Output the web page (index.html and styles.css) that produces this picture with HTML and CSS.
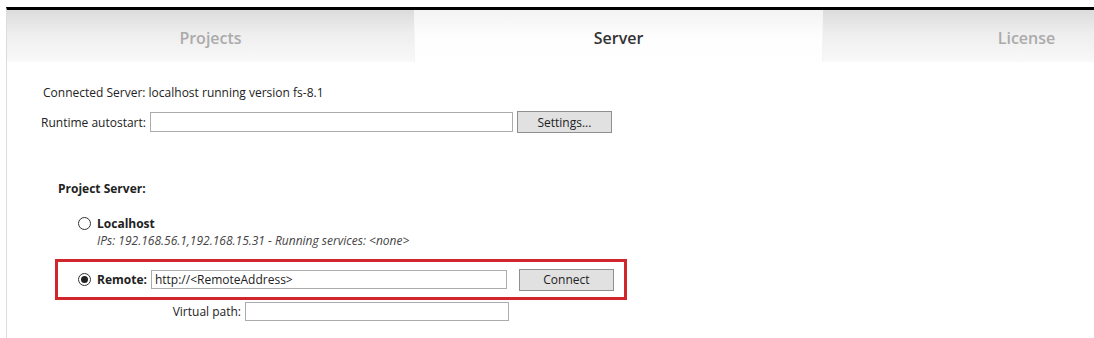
FILE: index.html
```html
<!DOCTYPE html>
<html lang="en">
<head>
  <meta charset="UTF-8" />
  <title>Server settings</title>
  <link rel="stylesheet" href="styles.css">
</head>
<body>
  <div class="frame">
    <div class="tabs">
      <div class="tab">Projects</div>
      <div class="tab active">Server</div>
      <div class="tab">License</div>
    </div>

    <div class="content">
      <p class="status">Connected Server: localhost running version fs-8.1</p>

      <div class="row runtime">
        <label>Runtime autostart:</label>
        <input type="text" class="field wide">
        <button class="btn">Settings...</button>
      </div>

      <h3>Project Server:</h3>

      <div class="option">
        <div class="row">
          <span class="radio"></span>
          <b>Localhost</b>
        </div>
        <div class="hint">IPs: 192.168.56.1,192.168.15.31 - Running services: &lt;none&gt;</div>
      </div>

      <div class="remote">
        <span class="radio checked"></span>
        <b>Remote:</b>
        <input type="text" class="field url" value="http://&lt;RemoteAddress&gt;">
        <button class="btn">Connect</button>
      </div>

      <div class="row vpath">
        <label>Virtual path:</label>
        <input type="text" class="field path">
      </div>
    </div>
  </div>
</body>
</html>
```

FILE: styles.css
```css
* { margin: 0; padding: 0; box-sizing: border-box; }
body, html {
  height: 100%;
  background: #fff;
  font-family: 'Open Sans', 'Noto Sans', sans-serif;
  font-size: 12px;
  color: #222;
  overflow: hidden;
}
.frame {
  margin: 7px 0 0 6px;
  border-top: 3px solid #000;
  border-left: 1px solid #dcdcdc;
  height: 100%;
  width: 1088px;
  overflow: hidden;
}
.tabs {
  display: flex;
  height: 52px;
}
.tab {
  flex: 0 0 408px;
  display: flex;
  align-items: center;
  justify-content: center;
  padding-top: 3px;
  font-size: 16px;
  font-weight: 600;
  color: #ababab;
  background: linear-gradient(#dcdcdc, #eeeeee 45%, #f9f9f9);
  border-right: 1px solid #f4f4f4;
}
.tab.active {
  color: #333;
  background: linear-gradient(#f3f3f3, #fdfdfd 50%, #fff);
}
.content {
  padding: 23px 0 0 36px;
}
.status {
  line-height: 16px;
  margin-bottom: 10px;
}
.row {
  display: flex;
  align-items: center;
  gap: 4px;
}
.runtime label { margin-left: -2px; }
.field {
  height: 20px;
  border: 1px solid #acacac;
  background: #fff;
  font: inherit;
  color: #222;
  padding: 0 3px;
  outline: none;
}
.wide { width: 363px; }
.btn {
  width: 95px;
  height: 22px;
  border: 1px solid #8f8f8f;
  background: #e1e1e1;
  font: inherit;
  font-size: 12px;
  color: #222;
}
h3 {
  font-size: 12px;
  font-weight: 700;
  margin: 48px 0 0 15px;
  line-height: 16px;
}
.option {
  margin: 18px 0 0 35px;
}
.option .row { gap: 6px; }
.hint {
  font-style: italic;
  color: #444;
  margin: 1px 0 0 19px;
  line-height: 15px;
}
.radio {
  width: 13px;
  height: 13px;
  border: 1px solid #333;
  border-radius: 50%;
  display: inline-flex;
  align-items: center;
  justify-content: center;
  background: #fff;
}
.radio.checked::after {
  content: "";
  width: 7px;
  height: 7px;
  border-radius: 50%;
  background: #222;
}
.remote {
  display: flex;
  align-items: center;
  width: 572px;
  height: 41px;
  margin: 11px 0 0 12px;
  padding-left: 20px;
  border: 3px solid #d0262c;
  gap: 4px;
}
.remote .radio { margin-right: 2px; }
.remote .btn { margin-left: 8px; }
.url { width: 356px; height: 19px; }
.vpath {
  margin: 2px 0 0 0;
}
.vpath label {
  width: 198px;
  text-align: right;
}
.path { width: 264px; height: 19px; }
```
